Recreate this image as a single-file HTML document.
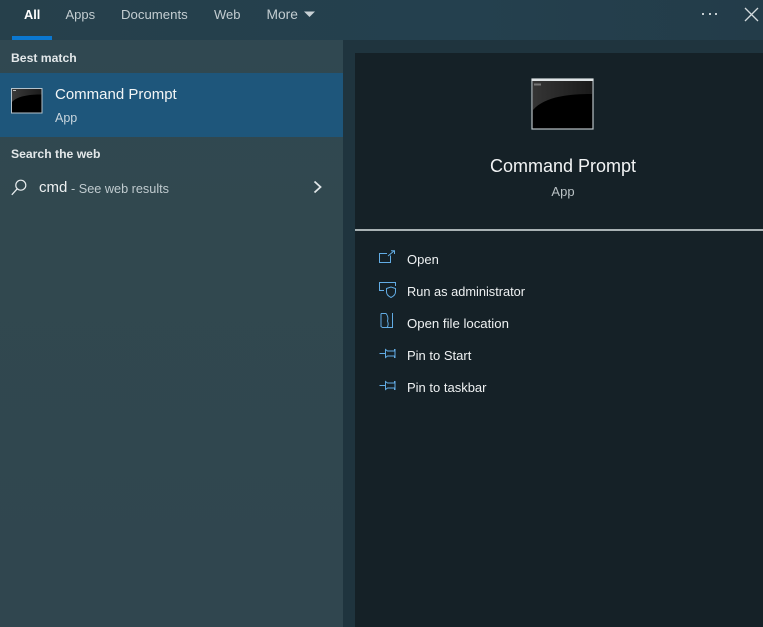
<!DOCTYPE html>
<html><head><meta charset="utf-8">
<style>
html,body{margin:0;padding:0}
body{width:763px;height:627px;overflow:hidden;position:relative;background:#1f343e;font-family:"Liberation Sans",sans-serif;color:#e8eced}
.a{position:absolute;white-space:nowrap;line-height:18px}
.tab{font-size:13px;color:#c3cdd1;top:6px}
.h{font-size:12.2px;font-weight:bold;color:#e3e8ea}
.act{left:407px;font-size:13px;color:#eef1f2}
svg{position:absolute;overflow:visible}
</style></head>
<body>
<div class="a" style="left:0;top:0;width:763px;height:40px;background:linear-gradient(90deg,#26404b,#24404e 60%,#233c49)"></div>
<div class="a" style="left:0;top:40px;width:343px;height:587px;background:linear-gradient(180deg,#304851 0,#31484f 30%,#30464f 100%)"></div>
<div class="a" style="left:355px;top:53px;width:408px;height:574px;background:#152127"></div>
<div class="a" style="left:12px;top:36px;width:40px;height:4px;background:#0b78d0"></div>

<div class="a tab" style="left:24px;color:#fff;font-weight:bold;font-size:12.8px">All</div>
<div class="a tab" style="left:65.500px">Apps</div>
<div class="a tab" style="left:121px;font-size:13.2px">Documents</div>
<div class="a tab" style="left:214px">Web</div>
<div class="a tab" style="left:266.500px;font-size:13.8px">More</div>
<svg style="left:303.500px;top:11px" width="12" height="7"><path d="M0 0.500H11L5.500 6Z" fill="#c8d1d5"/></svg>

<svg style="left:700px;top:13px" width="20" height="4"><g fill="#c5ced2"><rect x="2" y="0" width="2" height="2"/><rect x="9" y="0" width="2" height="2"/><rect x="15" y="0" width="2" height="2"/></g></svg>
<svg style="left:744px;top:7px" width="15" height="15"><path d="M1 1L14 14M14 1L1 14" stroke="#d3dadd" stroke-width="1.300" fill="none"/></svg>

<div class="a h" style="left:11px;top:49px">Best match</div>
<div class="a" style="left:0;top:73px;width:343px;height:64px;background:#1e567b"></div>
<svg style="left:11px;top:88px" width="32" height="26" viewBox="0 0 32 26">
<defs><linearGradient id="g1"><stop offset="0" stop-color="#3a3a3a"/><stop offset="1" stop-color="#1c1c1c"/></linearGradient><linearGradient id="g2"><stop offset="0" stop-color="#353535"/><stop offset="1" stop-color="#1a1a1a"/></linearGradient></defs>
<rect x="0.500" y="0.500" width="30.500" height="24.500" fill="#000" stroke="#b4c2cb"/>
<path d="M1 1H30.500V6.500C20 6.500 7 7.500 1 14Z" fill="url(#g1)"/>
<rect x="2" y="2" width="3" height="1" fill="#bbb"/>
</svg>
<div class="a" style="left:55px;top:85.500px;font-size:15px;color:#f2f5f6">Command Prompt</div>
<div class="a" style="left:55px;top:109px;font-size:12.500px;color:#c9d6de">App</div>

<div class="a h" style="left:11px;top:145px">Search the web</div>
<svg style="left:11px;top:179px" width="17" height="17" viewBox="0 0 17 17"><circle cx="9.800" cy="6.200" r="5" fill="none" stroke="#e6ebed" stroke-width="1.200"/><path d="M6.200 9.800L0.800 15.800" stroke="#e6ebed" stroke-width="1.300"/></svg>
<div class="a" style="left:39px;top:179px;font-size:15px;color:#eef1f2">cmd</div>
<div class="a" style="left:71px;top:180px;font-size:12.700px;color:#c0cbcf">- See web results</div>
<svg style="left:313px;top:180px" width="10" height="14"><path d="M1.500 1.500L7.500 7L1.500 12.500" fill="none" stroke="#dfe5e7" stroke-width="1.800"/></svg>

<svg style="left:531px;top:78px" width="63" height="52" viewBox="0 0 63 52">
<rect x="1" y="1" width="61" height="50" fill="#000" stroke="#b9c2c6" stroke-width="1.200"/>
<rect x="0.500" y="0.500" width="62" height="2.500" fill="#dfe4e6"/>
<path d="M2 3H61V16C40 16 14 18 2 32Z" fill="url(#g2)"/>
<rect x="3" y="5.500" width="7" height="2" fill="#777"/>
</svg>
<div class="a" style="left:355px;width:416px;text-align:center;top:157px;font-size:18px;color:#f2f4f5">Command Prompt</div>
<div class="a" style="left:355px;width:416px;text-align:center;top:183px;font-size:13px;color:#b9c1c4">App</div>
<div class="a" style="left:355px;top:229px;width:408px;height:2px;background:#a9b2b4"></div>

<svg style="left:379px;top:250px" width="17" height="14" viewBox="0 0 17 14" fill="none" stroke="#62ace4"><path d="M11.500 5.500V12.500H0.500V3.500H8"/><path d="M9 6L15 1M12 0.800H15.500V4"/></svg>
<svg style="left:379px;top:282px" width="18" height="16" viewBox="0 0 18 16" fill="none" stroke="#62ace4"><path d="M5 8.500H0.500V0.500H16.500V4"/><path d="M7.500 6.500L12 5L16.500 6.500V10C16.500 12.500 14 14.500 12 15.500C10 14.500 7.500 12.500 7.500 10Z"/></svg>
<svg style="left:380px;top:312px" width="15" height="18" viewBox="0 0 15 18" fill="none" stroke="#62ace4"><path d="M1 1.500V14.500L2.500 15.500H12.500V1"/><path d="M1 1.500H6C8 4 8.500 6 7.500 9C8.500 11.500 8.500 13.500 7 15.500"/></svg>
<svg style="left:379px;top:347px" width="17" height="13" viewBox="0 0 17 13" fill="none" stroke="#62ace4"><path d="M0.500 6.500H6.500"/><path d="M6.500 2.500V10.500L8.500 9H15.500V10.500H16V2.500H15.500V4H8.500Z"/></svg>
<svg style="left:379px;top:379px" width="17" height="13" viewBox="0 0 17 13" fill="none" stroke="#62ace4"><path d="M0.500 6.500H6.500"/><path d="M6.500 2.500V10.500L8.500 9H15.500V10.500H16V2.500H15.500V4H8.500Z"/></svg>

<div class="a act" style="top:251px">Open</div>
<div class="a act" style="top:283px;font-size:12.800px">Run as administrator</div>
<div class="a act" style="top:315px;font-size:13.200px">Open file location</div>
<div class="a act" style="top:347px">Pin to Start</div>
<div class="a act" style="top:379px">Pin to taskbar</div>
</body></html>
